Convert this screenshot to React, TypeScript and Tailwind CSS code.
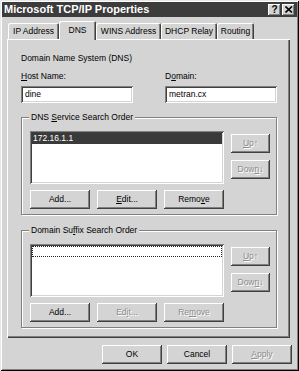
import React from "react";

const raised =
  "shadow-[inset_-1px_-1px_#404040,inset_1px_1px_#ffffff,inset_-2px_-2px_#808080]";
const sunken =
  "shadow-[inset_1px_1px_#808080,inset_-1px_-1px_#ffffff,inset_2px_2px_#404040,inset_-2px_-2px_#d4d4d4]";

function Btn({
  w,
  disabled,
  children,
}: {
  w: string;
  disabled?: boolean;
  children: React.ReactNode;
}) {
  return (
    <div
      className={`${w} h-[19px] shrink-0 flex items-center justify-center bg-[#d4d4d4] ${raised} ${
        disabled ? "text-[#8c8c8c] [text-shadow:1px_1px_0_#ffffff]" : "text-black"
      }`}
    >
      {children}
    </div>
  );
}

function U({ children }: { children: React.ReactNode }) {
  return <span className="underline underline-offset-1">{children}</span>;
}

function Tab({
  label,
  selected,
  w,
}: {
  label: React.ReactNode;
  selected?: boolean;
  w: string;
}) {
  return (
    <div
      className={`${w} ${
        selected ? "h-[19px] mb-[-1px] relative z-10" : "h-[16px]"
      } shrink-0 flex items-center justify-center rounded-t-[2px] bg-[#d4d4d4] shadow-[inset_1px_1px_#ffffff,inset_-1px_0_#404040,inset_-2px_0_#808080]`}
    >
      {label}
    </div>
  );
}

function Group({
  title,
  selectedItem,
  disabledActions,
}: {
  title: React.ReactNode;
  selectedItem?: string;
  disabledActions?: boolean;
}) {
  return (
    <div className="w-[256px] border border-[#808080] shadow-[inset_1px_1px_#ffffff,1px_1px_#ffffff] pl-[8px] pb-[5px]">
      <div className="-mt-[7px] ml-[-1px] px-[2px] bg-[#d4d4d4] w-fit h-[13px] leading-[13px]">
        {title}
      </div>
      <div className="mt-[7px] flex gap-[7px]">
        <div className={`w-[194px] h-[53px] bg-white ${sunken} p-[2px]`}>
          {selectedItem ? (
            <div className="h-[11px] leading-[11px] bg-[#3a3a3a] text-white pl-[1px]">
              {selectedItem}
            </div>
          ) : (
            <div className="h-[11px] border border-dotted border-[#222]" />
          )}
        </div>
        <div className="flex flex-col w-[39px]">
          <div className="mt-[3px]">
            <Btn w="w-[39px]" disabled>
              <U>U</U>p↑
            </Btn>
          </div>
          <div className="mt-[7px]">
            <Btn w="w-[39px]" disabled>
              Dow<U>n</U>↓
            </Btn>
          </div>
        </div>
      </div>
      <div className="mt-[6px] flex gap-[7px]">
        <Btn w="w-[60px]">Add...</Btn>
        {disabledActions ? (
          <Btn w="w-[60px]" disabled>
            Ed<U>i</U>t...
          </Btn>
        ) : (
          <Btn w="w-[60px]">
            <U>E</U>dit...
          </Btn>
        )}
        {disabledActions ? (
          <Btn w="w-[60px]" disabled>
            Re<U>m</U>ove
          </Btn>
        ) : (
          <Btn w="w-[60px]">
            Remo<U>v</U>e
          </Btn>
        )}
      </div>
    </div>
  );
}

export default function App() {
  return (
    <div className="w-[299px] h-[371px] bg-[#d4d4d4] font-['Liberation_Sans',Arial,sans-serif] text-[8.5px] leading-[13px] text-black shadow-[inset_1px_1px_#e8e8e8,inset_-1px_-1px_#000000,inset_2px_2px_#ffffff,inset_-2px_-2px_#808080] p-[2px] flex flex-col overflow-hidden">
      {/* Title bar */}
      <div className="h-[15px] bg-[#3c3c3c] flex items-center pl-[2px] pr-[2px]">
        <span className="text-white font-bold text-[11px] leading-none">
          Microsoft TCP/IP Properties
        </span>
        <div className="ml-auto flex">
          <div
            className={`w-[13px] h-[12px] bg-[#d4d4d4] ${raised} flex items-center justify-center font-bold text-[10px] leading-none`}
          >
            ?
          </div>
          <div
            className={`w-[13px] h-[12px] ml-[1px] bg-[#d4d4d4] ${raised} flex items-center justify-center`}
          >
            <svg width="8" height="7" viewBox="0 0 8 7">
              <path d="M0.5 0.5 L7 6.5 M7 0.5 L0.5 6.5" stroke="#000" strokeWidth="1.6" />
            </svg>
          </div>
        </div>
      </div>

      {/* Tabs */}
      <div className="mt-[4px] ml-[6px] h-[18px] flex items-end">
        <Tab w="w-[51px]" label="IP Address" />
        <Tab w="w-[37px]" label="DNS" selected />
        <Tab w="w-[65px]" label="WINS Address" />
        <Tab w="w-[56px]" label="DHCP Relay" />
        <Tab w="w-[37px]" label="Routing" />
      </div>

      {/* Panel */}
      <div className="ml-[5px] w-[283px] h-[299px] bg-[#d4d4d4] shadow-[inset_1px_1px_#ffffff,inset_-1px_-1px_#404040,inset_-2px_-2px_#808080] pl-[14px] pt-[13px] flex flex-col">
        <div className="h-[13px]">Domain Name System (DNS)</div>
        <div className="mt-[5px] flex gap-[32px]">
          <div className="flex flex-col w-[112px]">
            <div className="h-[13px]">
              <U>H</U>ost Name:
            </div>
            <div className={`mt-[3px] h-[17px] bg-white ${sunken} pl-[4px] flex items-center`}>
              dine
            </div>
          </div>
          <div className="flex flex-col w-[112px]">
            <div className="h-[13px]">
              D<U>o</U>main:
            </div>
            <div className={`mt-[3px] h-[17px] bg-white ${sunken} pl-[4px] flex items-center`}>
              metran.cx
            </div>
          </div>
        </div>
        <div className="mt-[14px]">
          <Group
            title={
              <>
                DNS <U>S</U>ervice Search Order
              </>
            }
            selectedItem="172.16.1.1"
          />
        </div>
        <div className="mt-[15px]">
          <Group
            title={
              <>
                Domain Su<U>f</U>fix Search Order
              </>
            }
            disabledActions
          />
        </div>
      </div>

      {/* Bottom buttons */}
      <div className="mt-[7px] pr-[5px] flex justify-end gap-[5px]">
        <Btn w="w-[60px]">OK</Btn>
        <Btn w="w-[60px]">Cancel</Btn>
        <Btn w="w-[60px]" disabled>
          <U>A</U>pply
        </Btn>
      </div>
    </div>
  );
}
